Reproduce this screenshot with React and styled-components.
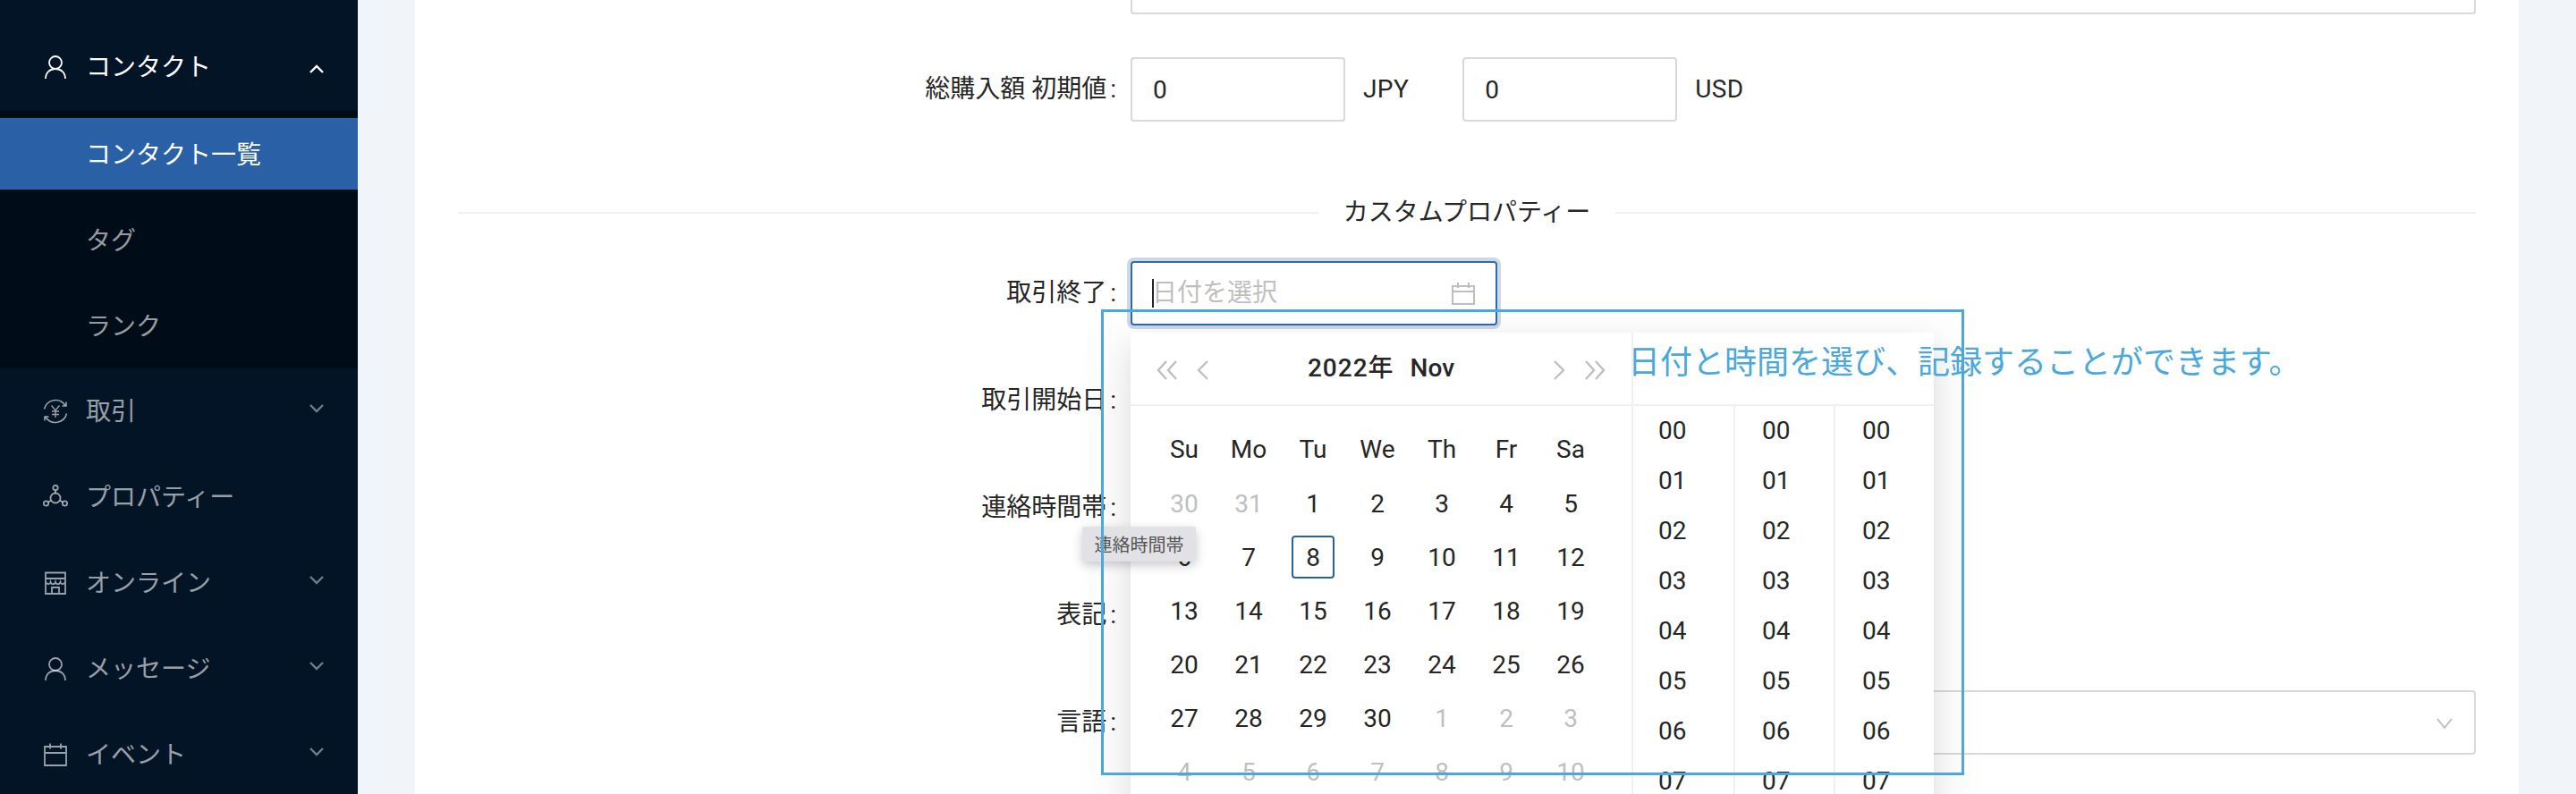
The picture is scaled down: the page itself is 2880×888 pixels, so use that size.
import React from 'react';
import styled, { createGlobalStyle } from 'styled-components';

const Global = createGlobalStyle`
  html, body { margin: 0; padding: 0; height: 888px; overflow: hidden; background: #fff; }
  body { font-family: Roboto, "Noto Sans CJK JP", sans-serif; font-size: 28px; color: #262626; }
  * { box-sizing: border-box; }
`;

const Page = styled.div`position: relative; display: flex; width: 2880px; height: 888px; overflow: hidden;`;

const Sidebar = styled.nav`
  width: 400px; flex: none; height: 888px; overflow: hidden; padding-top: 35px; background: #031427;
  color: rgba(255,255,255,.65);
`;
const MenuItem = styled.div`
  display: flex; align-items: center; height: 80px; margin-bottom: ${p => p.$open ? 9 : 16}px; padding: 0 37px 0 48px;
  color: ${p => p.$open ? '#fff' : 'rgba(255,255,255,.6)'};
`;
const MenuIcon = styled.svg`width: 28px; height: 28px; flex: none; margin-right: 20px; fill: none; stroke: currentColor; stroke-width: 1.8;`;
const MenuLabel = styled.span`flex: 1; line-height: 40px; transform: translateY(1px);`;
const Chevron = styled.svg`
  width: 18px; height: 12px; flex: none; fill: none; stroke: currentColor; stroke-width: 2.4; opacity: ${p => p.$open ? 1 : .75};
  transform: translateY(${p => p.$open ? 2 : -3}px);
`;
const SubMenu = styled.div`background: #000c17; padding: 8px 0; margin-bottom: 8px;`;
const SubItem = styled.div`
  display: flex; align-items: center; height: 80px; padding-left: 96px; margin-bottom: ${p => p.$last ? 0 : 16}px; padding-bottom: 2px;
  background: ${p => p.$active ? '#2a60a5' : 'transparent'};
  color: ${p => p.$active ? '#fff' : 'rgba(255,255,255,.6)'};
`;

const Main = styled.main`flex: 1; height: 888px; padding: 0 64px; background: #f1f4f9; overflow: hidden;`;
const Card = styled.section`background: #fff; height: 888px; padding: 0 48px; display: flow-root;`;
const Form = styled.div`margin-top: -56px;`;
const Row = styled.div`display: flex; align-items: center; height: 72px; margin-bottom: 48px;`;
const Label = styled.label`width: 752px; flex: none; padding-right: 16px; text-align: right; line-height: 40px; white-space: pre;`;
const Colon = styled.span`margin-left: 4px;`;
const Control = styled.div`flex: 1; display: flex; align-items: center; height: 72px; position: relative;`;
const TextInput = styled.input`
  height: 72px; width: ${p => p.$w ? p.$w + 'px' : '100%'}; padding: 0 23px; border: 2px solid #d9d9d9; border-radius: 4px;
  font: inherit; color: inherit; background: #fff; outline: none;
`;
const Unit = styled.span`margin: 0 ${p => p.$gap || 0}px 0 20px; line-height: 40px; letter-spacing: .4px;`;
const Divider = styled.div`
  display: flex; align-items: center; height: 44px; margin: 80px 0 32px;
  &::before, &::after { content: ''; flex: 1; height: 2px; background: #f0f0f0; }
`;
const DividerText = styled.span`padding: 0 28px; line-height: 44px;`;

const DateField = styled.div`
  display: flex; align-items: center; width: 410px; height: 72px; padding: 0 22px; border-radius: 4px; background: #fff;
  border: 2px solid ${p => p.$focus ? '#2f6cae' : '#d9d9d9'};
  box-shadow: ${p => p.$focus ? '0 0 0 4px #ccd9e9' : 'none'};
`;
const Caret = styled.span`width: 2px; height: 32px; background: #262626; margin-right: -2px; flex: none;`;
const Placeholder = styled.span`flex: 1; color: #bfbfbf; line-height: 40px;`;
const FieldIcon = styled.svg`width: 28px; height: 28px; flex: none; fill: none; stroke: #bfbfbf; stroke-width: 2;`;

const Popup = styled.div`
  position: absolute; top: 80px; left: 0; z-index: 3; display: flex; width: 898px; background: #fff; border-radius: 4px;
  box-shadow: 0 6px 12px -8px rgba(0,0,0,.12), 0 12px 32px rgba(0,0,0,.08), 0 18px 56px 16px rgba(0,0,0,.05);
`;
const DatePanel = styled.div`width: 560px; flex: none;`;
const PanelHead = styled.div`
  display: flex; align-items: center; height: 82px; border-bottom: 2px solid #f0f0f0; padding: 0 28px;
`;
const NavIcon = styled.svg`width: ${p => p.$w}px; height: 24px; flex: none; fill: none; stroke: #bfbfbf; stroke-width: 2.4; margin-left: ${p => p.$ml || 0}px; transform: translateY(2px);`;
const PanelTitle = styled.div`flex: 1; display: flex; justify-content: center; gap: 18px; font-weight: 500; line-height: 40px;`;
const TitleYear = styled.span`letter-spacing: 1px;`;
const Days = styled.div`
  display: grid; grid-template-columns: repeat(7, 72px); grid-template-rows: 61px; grid-auto-rows: 60px; padding: 18px 0 0 24px; height: 434px; overflow: hidden;
`;
const DayCell = styled.div`display: flex; align-items: center; justify-content: center; color: ${p => p.$muted ? '#bfbfbf' : '#262626'};`;
const DayNum = styled.span`
  display: flex; align-items: center; justify-content: center; width: 48px; height: 48px; border-radius: 4px;
  border: 2px solid ${p => p.$today ? '#2a60a5' : 'transparent'};
`;
const TimePanel = styled.div`width: 338px; flex: none; border-left: 2px solid #f0f0f0;`;
const TimeHead = styled.div`height: 82px; border-bottom: 2px solid #f0f0f0;`;
const TimeCols = styled.div`display: grid; grid-template-columns: 112px 112px 112px;`;
const TimeCol = styled.div`
  border-left: ${p => p.$first ? 0 : 2}px solid #f0f0f0; padding-left: ${p => p.$first ? 28 : 30}px;
`;
const TimeCell = styled.div`height: 56px; line-height: 56px;`;
const CaretDown = styled.svg`position: absolute; right: 26px; top: 30px; width: 18px; height: 14px; fill: none; stroke: #bfbfbf; stroke-width: 2;`;

const Tip = styled.div`
  position: absolute; z-index: 4; left: 1210px; top: 589px; width: 127px; height: 39px; display: flex; align-items: center; justify-content: center;
  background: #e2e2e6; border-radius: 3px; box-shadow: 0 4px 12px rgba(0,0,0,.22); font-size: 20px; color: #555;
`;
const Annotation = styled.div`
  position: absolute; z-index: 5; left: 1231px; top: 346px; width: 965px; height: 521px; border: 3px solid #4aa8dc; pointer-events: none;
`;
const AnnotationText = styled.div`
  position: absolute; z-index: 5; left: 1820px; top: 384px; font-size: 36px; line-height: 44px; color: #4aa8dc; white-space: nowrap;
`;

const chev = <polyline points="2,2 9,9 16,2" />;
const chevUp = <polyline points="2,10 9,3 16,10" />;

const UserIcon = () => (
  <MenuIcon viewBox="0 0 28 28"><circle cx="14" cy="9" r="7" /><path d="M3 27c0-7 5-11 11-11s11 4 11 11" /></MenuIcon>
);
const YenIcon = () => (
  <MenuIcon viewBox="0 0 28 28">
    <path d="M1.500 11.500A13 13 0 0 1 25 7.500M26.500 16.500A13 13 0 0 1 3 20.500" strokeWidth="1.600" />
    <path d="M26 3.500v4.500h-4.500M2 24.500V20h4.500" strokeWidth="1.600" />
    <path d="M9.500 7.500 14 13l4.500-5.500M14 13v8M10 14h8M10 17.500h8" strokeWidth="1.400" />
  </MenuIcon>
);
const HubIcon = () => (
  <MenuIcon viewBox="0 0 28 28">
    <circle cx="14" cy="15" r="5.500" /><circle cx="14" cy="3.500" r="2.700" /><circle cx="3.500" cy="21" r="2.700" /><circle cx="24.500" cy="21" r="2.700" />
    <path d="M14 6.500v3M6 19.600l3-1.800M22 19.600l-3-1.800" />
  </MenuIcon>
);
const StoreIcon = () => (
  <MenuIcon viewBox="0 0 28 28">
    <path d="M3 2.500V26h22V2.500zM3 9h22M3 13c2.500 3 4.700 3 5.500 0 .8 3 4.700 3 5.500 0 .8 3 4.700 3 5.500 0 .8 3 3 3 5.500 0M10 26v-7h8v7" />
  </MenuIcon>
);
const CalIcon = () => (
  <MenuIcon viewBox="0 0 28 28"><path d="M2 5h24v21H2zM2 12h24M8 1.500v6M20 1.500v6" /></MenuIcon>
);
const PickerIcon = () => (
  <FieldIcon viewBox="0 0 28 28"><path d="M2 6h24v20H2zM2 12h24M8 2v6M20 2v6" /></FieldIcon>
);

const weekdays = ['Su', 'Mo', 'Tu', 'We', 'Th', 'Fr', 'Sa'];
const days = [
  [30, 1], [31, 1], [1], [2], [3], [4], [5],
  [6], [7], [8, 0, 1], [9], [10], [11], [12],
  [13], [14], [15], [16], [17], [18], [19],
  [20], [21], [22], [23], [24], [25], [26],
  [27], [28], [29], [30], [1, 1], [2, 1], [3, 1],
  [4, 1], [5, 1], [6, 1], [7, 1], [8, 1], [9, 1], [10, 1],
];
const times = ['00', '01', '02', '03', '04', '05', '06', '07'];

const FieldLabel = ({ children }) => <Label>{children}<Colon>:</Colon></Label>;

export default function App() {
  return (
    <Page>
      <Global />
      <Sidebar>
        <MenuItem $open>
          <UserIcon /><MenuLabel>コンタクト</MenuLabel>
          <Chevron $open viewBox="0 0 18 12">{chevUp}</Chevron>
        </MenuItem>
        <SubMenu>
          <SubItem $active>コンタクト一覧</SubItem>
          <SubItem>タグ</SubItem>
          <SubItem $last>ランク</SubItem>
        </SubMenu>
        <MenuItem><YenIcon /><MenuLabel>取引</MenuLabel><Chevron viewBox="0 0 18 12">{chev}</Chevron></MenuItem>
        <MenuItem><HubIcon /><MenuLabel>プロパティー</MenuLabel></MenuItem>
        <MenuItem><StoreIcon /><MenuLabel>オンライン</MenuLabel><Chevron viewBox="0 0 18 12">{chev}</Chevron></MenuItem>
        <MenuItem><UserIcon /><MenuLabel>メッセージ</MenuLabel><Chevron viewBox="0 0 18 12">{chev}</Chevron></MenuItem>
        <MenuItem><CalIcon /><MenuLabel>イベント</MenuLabel><Chevron viewBox="0 0 18 12">{chev}</Chevron></MenuItem>
      </Sidebar>
      <Main>
        <Card>
          <Form>
            <Row>
              <Label />
              <Control><TextInput readOnly /></Control>
            </Row>
            <Row>
              <FieldLabel>総購入額 初期値</FieldLabel>
              <Control>
                <TextInput $w={240} defaultValue="0" />
                <Unit $gap={60}>JPY</Unit>
                <TextInput $w={240} defaultValue="0" />
                <Unit>USD</Unit>
              </Control>
            </Row>
            <Divider><DividerText>カスタムプロパティー</DividerText></Divider>
            <Row>
              <FieldLabel>取引終了</FieldLabel>
              <Control>
                <DateField $focus><Caret /><Placeholder>日付を選択</Placeholder><PickerIcon /></DateField>
                <Popup>
                  <DatePanel>
                    <PanelHead>
                      <NavIcon $w={26} viewBox="0 0 26 24"><path d="M12 2 3 12l9 10M23 2l-9 10 9 10" /></NavIcon>
                      <NavIcon $w={16} $ml={18} viewBox="0 0 16 24"><path d="M14 2 4 12l10 10" /></NavIcon>
                      <PanelTitle><TitleYear>2022年</TitleYear><span>Nov</span></PanelTitle>
                      <NavIcon $w={16} viewBox="0 0 16 24"><path d="m2 2 10 10L2 22" /></NavIcon>
                      <NavIcon $w={26} $ml={18} viewBox="0 0 26 24"><path d="m3 2 9 10-9 10M14 2l9 10-9 10" /></NavIcon>
                    </PanelHead>
                    <Days>
                      {weekdays.map(w => <DayCell key={w}>{w}</DayCell>)}
                      {days.map(([n, muted, today], i) => (
                        <DayCell key={i} $muted={muted}><DayNum $today={today}>{n}</DayNum></DayCell>
                      ))}
                    </Days>
                  </DatePanel>
                  <TimePanel>
                    <TimeHead />
                    <TimeCols>
                      {[0, 1, 2].map(c => (
                        <TimeCol key={c} $first={c === 0}>
                          {times.map(t => <TimeCell key={t}>{t}</TimeCell>)}
                        </TimeCol>
                      ))}
                    </TimeCols>
                  </TimePanel>
                </Popup>
              </Control>
            </Row>
            <Row><FieldLabel>取引開始日</FieldLabel><Control><DateField /></Control></Row>
            <Row><FieldLabel>連絡時間帯</FieldLabel><Control><DateField /></Control></Row>
            <Row><FieldLabel>表記</FieldLabel><Control><DateField /></Control></Row>
            <Row>
              <FieldLabel>言語</FieldLabel>
              <Control>
                <TextInput readOnly />
                <CaretDown viewBox="0 0 18 14"><polyline points="1,2 9,12 17,2" /></CaretDown>
              </Control>
            </Row>
          </Form>
        </Card>
      </Main>
      <Tip>連絡時間帯</Tip>
      <Annotation />
      <AnnotationText>日付と時間を選び、記録することができます。</AnnotationText>
    </Page>
  );
}
